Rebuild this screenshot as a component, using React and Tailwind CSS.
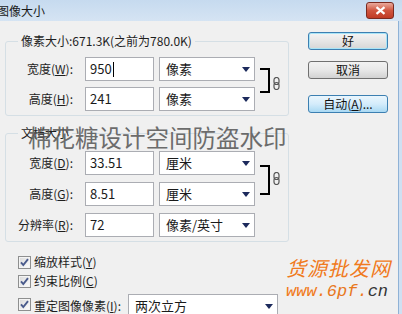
import React from "react";

const FONT = "font-['Noto_Sans_CJK_SC','Noto_Sans',sans-serif]";

function Arrow() {
  return (
    <svg width="8" height="5" viewBox="0 0 8 5">
      <path d="M0 0 H8 L4 5 Z" fill="#1c2a5c" />
    </svg>
  );
}

function Select({ value, width }) {
  return (
    <div className={`flex h-[24px] items-center border border-[#abadb3] bg-white ${width}`}>
      <span className="flex-1 truncate pl-[6px] text-[13px] text-[#1a1a1a]">{value}</span>
      <span className="flex h-full w-[17px] items-center justify-center">
        <Arrow />
      </span>
    </div>
  );
}

function Field({ value, caret }) {
  return (
    <div className="flex h-[24px] w-[69px] items-center border border-[#abadb3] bg-white pl-[4px] text-[13px] text-[#1a1a1a]">
      <span>{value}</span>
      {caret && <span className="ml-[1px] h-[15px] w-px bg-black" />}
    </div>
  );
}

function Row({ label, hot, value, unit, caret, className = "" }) {
  return (
    <div className={`flex items-center ${className}`}>
      <span className="w-[67px] text-right text-[12px] text-[#1e1e1e]">
        {label}(<u>{hot}</u>):
      </span>
      <div className="ml-[12px]">
        <Field value={value} caret={caret} />
      </div>
      <div className="ml-[5px]">
        <Select value={unit} width="w-[96px]" />
      </div>
    </div>
  );
}

function Link() {
  return (
    <svg width="7" height="13" viewBox="0 0 7 13">
      <rect x="1" y="0.5" width="5" height="7" rx="2.5" fill="none" stroke="#555" strokeWidth="1.2" />
      <rect x="1" y="5.5" width="5" height="7" rx="2.5" fill="none" stroke="#555" strokeWidth="1.2" />
    </svg>
  );
}

function Bracket({ top, height, linkTop }) {
  return (
    <div className="ml-[5px] flex">
      <div className={`w-[10px] border-y-2 border-r-2 border-black ${top} ${height}`} />
      <div className={`ml-[3px] ${linkTop}`}>
        <Link />
      </div>
    </div>
  );
}

function Check() {
  return (
    <svg width="13" height="13" viewBox="0 0 13 13">
      <defs>
        <linearGradient id="cb" x1="0" y1="0" x2="1" y2="1">
          <stop offset="0" stopColor="#dcdcdc" />
          <stop offset="1" stopColor="#fbfbfb" />
        </linearGradient>
      </defs>
      <rect x="0.5" y="0.5" width="12" height="12" fill="#f4f4f4" stroke="#8e8f8f" />
      <rect x="2" y="2" width="9" height="9" fill="url(#cb)" />
      <path d="M3 6.3 L5.3 9 L10 3.2" fill="none" stroke="#4a5b8c" strokeWidth="1.9" />
    </svg>
  );
}

function Button({ children, kind }) {
  const styles = {
    focus:
      "border-[#3c7fb1] bg-gradient-to-b from-[#f4f4f4] via-[#e6e6e6] to-[#d6d6d6] shadow-[inset_0_0_0_1px_#a8e4f7]",
    plain: "border-[#707070] bg-gradient-to-b from-[#f2f2f2] via-[#e8e8e8] to-[#d2d2d2]",
    hover: "border-[#3c7fb1] bg-gradient-to-b from-[#eaf6fd] via-[#d4ecfb] to-[#a9d9f3]",
  };
  return (
    <div
      className={`flex h-[18px] w-[80px] items-center justify-center rounded-[3px] border text-[12px] text-[#111] ${styles[kind]}`}
    >
      {children}
    </div>
  );
}

export default function App() {
  return (
    <div className={`relative h-[314px] w-[402px] overflow-hidden bg-[#f0f0f0] ${FONT}`}>
      {/* title bar */}
      <div className="flex h-[21px] items-center justify-between bg-gradient-to-b from-[#c6daef] to-[#d5e4f3]">
        <span className="ml-[-3px] text-[12px] text-[#1a1a1a]">图像大小</span>
        <div className="mr-[8px] flex h-[17px] w-[28px] items-center justify-center rounded-[3px] border border-[#7a2a20] bg-gradient-to-b from-[#e9a99c] via-[#d0553f] to-[#c03a24]">
          <svg width="11" height="9" viewBox="0 0 11 9">
            <path d="M1.5 1.2 L9.5 7.8 M9.5 1.2 L1.5 7.8" stroke="#fff" strokeWidth="2.2" />
          </svg>
        </div>
      </div>

      <div className="flex h-[293px]">
        <div className="flex flex-1">
          {/* left column */}
          <div className="ml-[5px] flex w-[284px] flex-col">
            <fieldset className="mt-[12px] rounded-[3px] border border-[#d5dfe5] px-0 pb-[4px]">
              <legend className="ml-[12px] px-[3px] text-[12px] leading-[16px] text-[#1e1e1e]">
                像素大小:671.3K(之前为780.0K)
              </legend>
              <div className="mt-[8px] flex">
                <div className="flex flex-col gap-[6px]">
                  <Row label="宽度" hot="W" value="950" unit="像素" caret />
                  <Row label="高度" hot="H" value="241" unit="像素" />
                </div>
                <Bracket top="mt-[11px]" height="h-[25px]" linkTop="mt-[20px]" />
              </div>
            </fieldset>

            <fieldset className="mt-[9px] rounded-[3px] border border-[#d5dfe5] pb-[4px]">
              <legend className="ml-[12px] px-[3px] text-[12px] leading-[16px] text-[#1e1e1e]">
                文档大小
              </legend>
              <div className="mt-[10px] flex">
                <div className="flex flex-col gap-[7px]">
                  <Row label="宽度" hot="D" value="33.51" unit="厘米" />
                  <Row label="高度" hot="G" value="8.51" unit="厘米" />
                </div>
                <Bracket top="mt-[14px]" height="h-[30px]" linkTop="mt-[21px]" />
              </div>
              <Row label="分辨率" hot="R" value="72" unit="像素/英寸" className="mt-[7px]" />
            </fieldset>

            <div className="ml-[13px] flex flex-col text-[12px] text-[#1e1e1e]">
              <div className="mt-[12px] flex h-[16px] items-center gap-[3px]">
                <Check />
                <span>
                  缩放样式(<u>Y</u>)
                </span>
              </div>
              <div className="mt-[3px] flex h-[16px] items-center gap-[3px]">
                <Check />
                <span>
                  约束比例(<u>C</u>)
                </span>
              </div>
              <div className="mt-[5px] flex h-[24px] items-center">
                <div className="mb-[3px]">
                  <Check />
                </div>
                <span className="ml-[3px]">
                  重定图像像素(<u>I</u>):
                </span>
                <div className="ml-[7px]">
                  <Select value="两次立方" width="w-[150px]" />
                </div>
              </div>
            </div>
          </div>

          {/* buttons */}
          <div className="ml-[19px] mt-[11px] flex flex-col">
            <Button kind="focus">好</Button>
            <div className="mt-[11px]">
              <Button kind="plain">取消</Button>
            </div>
            <div className="mt-[16px]">
              <Button kind="hover">
                自动(<u>A</u>)...
              </Button>
            </div>
          </div>
        </div>
        {/* window frame */}
        <div className="w-[4px] border-l border-[#8fb2d6] bg-[#cfe0f2]" />
      </div>

      {/* watermarks */}
      <div className="pointer-events-none absolute left-[28px] top-[123px] text-[23.5px] leading-[28px] text-[#555] opacity-85">
        棉花糖设计空间防盗水印
      </div>
      <div className="pointer-events-none absolute left-[286px] top-[256px] flex flex-col items-start">
        <span className="text-[20px] italic leading-[24px] tracking-[1px] text-[#f07a20]">货源批发网</span>
        <span className="mt-[4px] font-['Liberation_Mono',monospace] text-[17px] italic leading-[16px] text-[#f07a20]">
          www.<span className="text-[#e8781e]">6pf</span>.<span className="text-[#333]">cn</span>
        </span>
      </div>
    </div>
  );
}
